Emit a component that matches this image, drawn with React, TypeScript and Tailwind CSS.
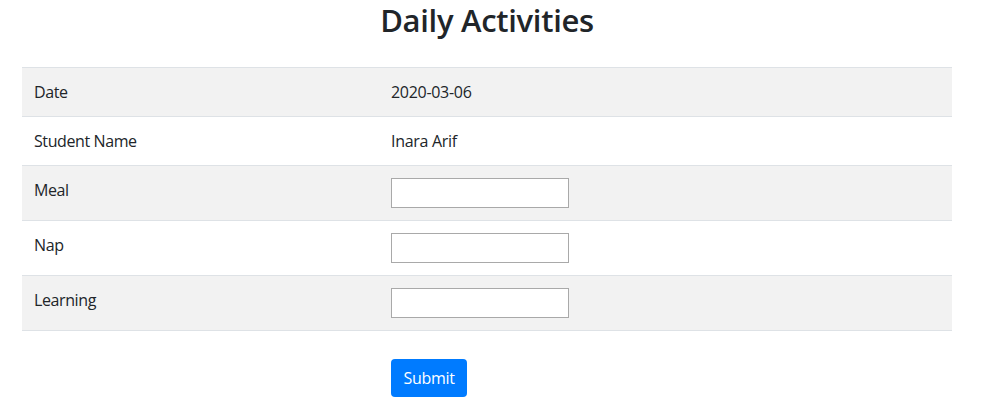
import React, { useState } from 'react'

type Row = { label: string; value?: string; field?: 'meal' | 'nap' | 'learning' }

const rows: Row[] = [
  { label: 'Date', value: '2020-03-06' },
  { label: 'Student Name', value: 'Inara Arif' },
  { label: 'Meal', field: 'meal' },
  { label: 'Nap', field: 'nap' },
  { label: 'Learning', field: 'learning' },
]

function App() {
  const [values, setValues] = useState({ meal: '', nap: '', learning: '' })

  const handleSubmit = (e: React.FormEvent<HTMLFormElement>) => {
    e.preventDefault()
  }

  return (
    <div className="min-h-screen bg-white text-[#212529] font-['Open_Sans',sans-serif] text-[16px] leading-6">
      <h2 className="text-center text-[31px] leading-[38px] font-semibold tracking-[-0.3px] pt-px mb-[28px] pr-[11px]">
        Daily Activities
      </h2>

      <form onSubmit={handleSubmit} className="mx-[22px] w-[930px]">
        <div className="border-t border-[#dee2e6]">
          {rows.map((row, i) => (
            <div
              key={row.label}
              className={`grid grid-cols-[357px_1fr] border-b border-[#dee2e6] ${i % 2 === 0 ? 'bg-[#f2f2f2]' : 'bg-white'}`}
            >
              <div className="p-3 tracking-[-0.4px]">{row.label}</div>
              <div className="p-3 tracking-[-0.3px]">
                {row.field ? (
                  <input
                    type="text"
                    value={values[row.field]}
                    onChange={(e) => setValues({ ...values, [row.field as string]: e.target.value })}
                    className="block w-[178px] h-[30px] bg-white border border-[#a9a9a9] px-0.5 outline-none"
                  />
                ) : (
                  row.value
                )}
              </div>
            </div>
          ))}
        </div>

        <div className="pl-[369px] pt-7">
          <button
            type="submit"
            className="w-[76px] h-[38px] rounded bg-[#007bff] text-white tracking-[-0.3px]"
          >
            Submit
          </button>
        </div>
      </form>
    </div>
  )
}

export default App
